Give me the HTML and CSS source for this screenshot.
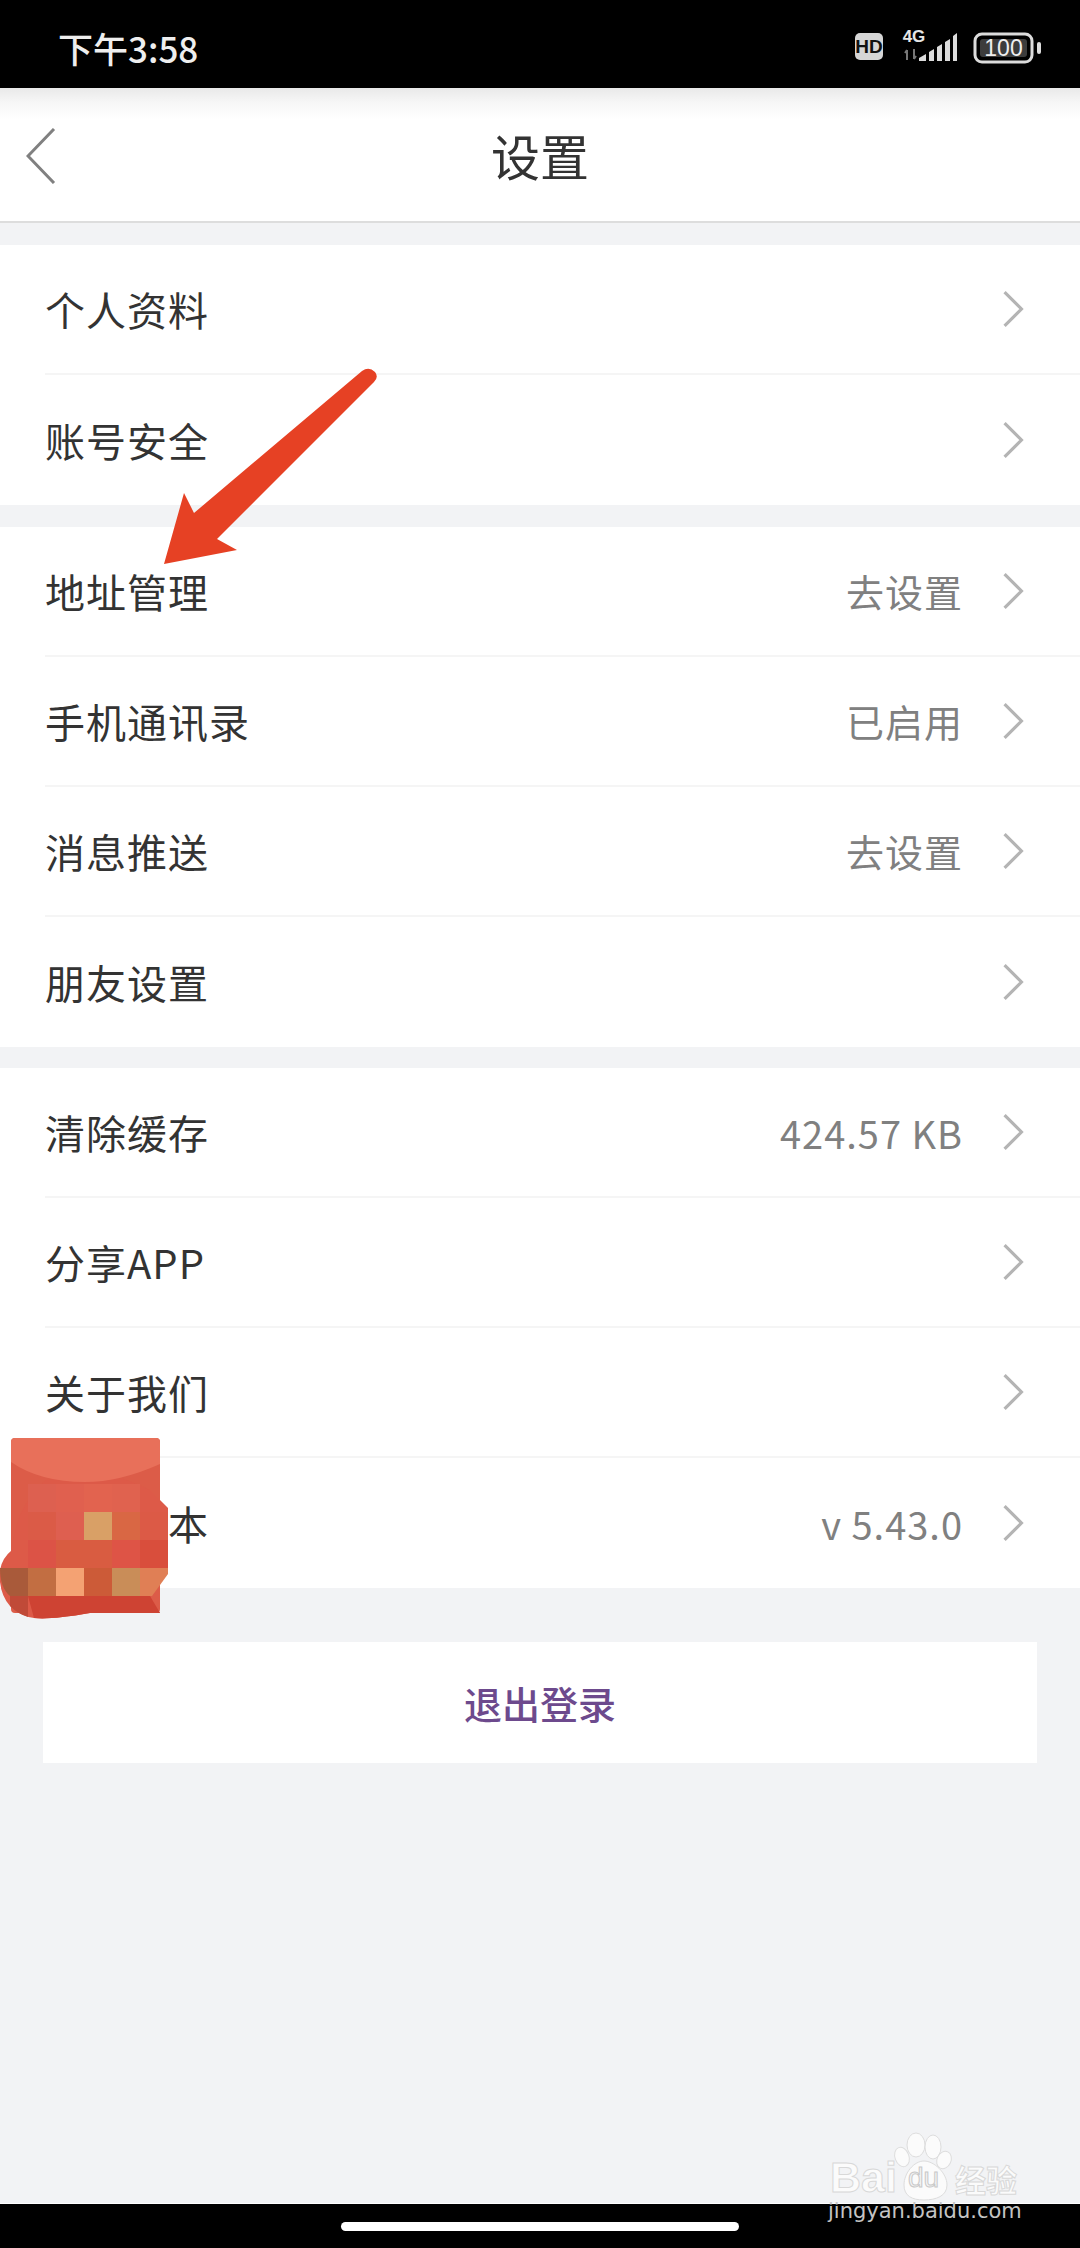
FILE: index.html
```html
<!DOCTYPE html>
<html lang="zh-CN">
<head>
    <meta charset="UTF-8">
    <meta name="viewport" content="width=device-width, initial-scale=1.0">
    <title>设置</title>
    <link rel="stylesheet" href="styles.css">
</head>
<body>
    <div class="status-bar">
        <span class="status-time">下午3:58</span>
        <svg class="status-icons" viewBox="0 0 190 38" width="190" height="38">
            <rect x="3" y="5" width="28" height="27" rx="5" fill="#d6d6d6"/>
            <text x="17" y="24.5" class="icon-hd">HD</text>
            <text x="62" y="14" class="icon-4g">4G</text>
            <path d="M55 22v10M53 25l2-3M62 21v10M64 28l-2 3" stroke="#777" stroke-width="2" fill="none"/>
            <path d="M67 33v-3l7-4v7zM77 33v-9l5-3v12zM85 33v-14l5-3v17zM93 33v-19l5-3v22zM101 33v-25l4-3v28z" fill="#dcdcdc"/>
            <rect x="123" y="6" width="57" height="28" rx="7" fill="none" stroke="#dcdcdc" stroke-width="3"/>
            <rect x="128" y="11" width="47" height="18" rx="3" fill="#3c3c3c"/>
            <text x="151.500" y="28" class="icon-battery">100</text>
            <rect x="185" y="14" width="4" height="12" rx="2" fill="#dcdcdc"/>
        </svg>
    </div>

    <header class="nav-bar">
        <svg class="nav-back" viewBox="0 0 30 56" width="30" height="56">
            <path d="M28 1L2 28l26 27" fill="none" stroke="#808080" stroke-width="3"/>
        </svg>
        <h1 class="nav-title">设置</h1>
    </header>

    <main class="settings">
        <section class="group">
            <div class="row"><div class="row-inner"><span class="row-label">个人资料</span><span class="row-right"><svg class="chevron" viewBox="0 0 20 36"><path d="M2 2l16 16L2 34"/></svg></span></div></div>
            <div class="row"><div class="row-inner"><span class="row-label">账号安全</span><span class="row-right"><svg class="chevron" viewBox="0 0 20 36"><path d="M2 2l16 16L2 34"/></svg></span></div></div>
        </section>

        <section class="group">
            <div class="row"><div class="row-inner"><span class="row-label">地址管理</span><span class="row-right"><span class="row-value">去设置</span><svg class="chevron" viewBox="0 0 20 36"><path d="M2 2l16 16L2 34"/></svg></span></div></div>
            <div class="row"><div class="row-inner"><span class="row-label">手机通讯录</span><span class="row-right"><span class="row-value">已启用</span><svg class="chevron" viewBox="0 0 20 36"><path d="M2 2l16 16L2 34"/></svg></span></div></div>
            <div class="row"><div class="row-inner"><span class="row-label">消息推送</span><span class="row-right"><span class="row-value">去设置</span><svg class="chevron" viewBox="0 0 20 36"><path d="M2 2l16 16L2 34"/></svg></span></div></div>
            <div class="row"><div class="row-inner"><span class="row-label">朋友设置</span><span class="row-right"><svg class="chevron" viewBox="0 0 20 36"><path d="M2 2l16 16L2 34"/></svg></span></div></div>
        </section>

        <section class="group">
            <div class="row"><div class="row-inner"><span class="row-label">清除缓存</span><span class="row-right"><span class="row-value">424.57 KB</span><svg class="chevron" viewBox="0 0 20 36"><path d="M2 2l16 16L2 34"/></svg></span></div></div>
            <div class="row"><div class="row-inner"><span class="row-label">分享APP</span><span class="row-right"><svg class="chevron" viewBox="0 0 20 36"><path d="M2 2l16 16L2 34"/></svg></span></div></div>
            <div class="row"><div class="row-inner"><span class="row-label">关于我们</span><span class="row-right"><svg class="chevron" viewBox="0 0 20 36"><path d="M2 2l16 16L2 34"/></svg></span></div></div>
            <div class="row"><div class="row-inner"><span class="row-label">当前版本</span><span class="row-right"><span class="row-value">v 5.43.0</span><svg class="chevron" viewBox="0 0 20 36"><path d="M2 2l16 16L2 34"/></svg></span></div></div>
        </section>

        <button class="logout">退出登录</button>
    </main>

    <footer class="home-bar"><span class="home-indicator"></span></footer>

    <!-- annotation arrow drawn over the list -->
    <svg class="arrow" viewBox="0 0 1080 2248" width="1080" height="2248">
        <path d="M164 564L184 493L194 513L362 371Q369 366 375 372Q379 377 374 382L217 539L237 550Z" fill="#e64124"/>
    </svg>

    <!-- red packet with the mosaic smear -->
    <svg class="packet" viewBox="0 0 170 200" width="170" height="200">
        <rect x="11" y="18" width="149" height="175" rx="4" fill="#dc5c48"/>
        <path d="M0 150Q2 138 12 130Q16 85 46 60L96 50Q130 60 150 70L168 88V150Q160 166 150 176L160 193H90Q50 200 34 198Q20 196 10 186Q-2 172 0 150Z" fill="#dd5a48"/>
        <path d="M11 22Q11 18 15 18H156Q160 18 160 22V44Q120 62 85 62Q40 62 11 42Z" fill="#e8705a"/>
        <rect x="28" y="64" width="28" height="28" fill="#dd6050"/>
        <rect x="56" y="64" width="28" height="28" fill="#e0604f"/>
        <rect x="84" y="64" width="28" height="28" fill="#e2634f"/>
        <rect x="112" y="64" width="28" height="28" fill="#e0624f"/>
        <rect x="28" y="92" width="28" height="28" fill="#db5b47"/>
        <rect x="56" y="92" width="28" height="28" fill="#de5f50"/>
        <rect x="84" y="92" width="28" height="28" fill="#d9a066"/>
        <rect x="112" y="92" width="28" height="28" fill="#d96744"/>
        <rect x="140" y="92" width="28" height="28" fill="#dc5a46"/>
        <rect x="28" y="120" width="28" height="28" fill="#dc5346"/>
        <rect x="56" y="120" width="56" height="28" fill="#d95c41"/>
        <rect x="112" y="120" width="28" height="28" fill="#de5446"/>
        <rect x="140" y="120" width="28" height="28" fill="#d94e3c"/>
        <path d="M0 148H28V176H10Q0 168 0 148Z" fill="#a95a3a"/>
        <rect x="28" y="148" width="28" height="28" fill="#c26e42"/>
        <rect x="56" y="148" width="28" height="28" fill="#f4a273"/>
        <rect x="84" y="148" width="28" height="28" fill="#cc5b38"/>
        <rect x="112" y="148" width="28" height="28" fill="#c98d58"/>
        <path d="M140 148H168V154L152 176H140Z" fill="#e07f55"/>
        <path d="M28 176H150L160 193H90Q50 200 34 198Z" fill="#ce4333"/>
        <path d="M10 176H28V197Q18 194 10 186Z" fill="#c04a38"/>
    </svg>

    <!-- baidu watermark -->
    <svg class="watermark" viewBox="0 0 200 80" width="200" height="80">
        <g class="mark-paw">
            <ellipse cx="86" cy="20" rx="9" ry="12"/>
            <ellipse cx="103" cy="22" rx="8" ry="12"/>
            <ellipse cx="72" cy="32" rx="7" ry="10" transform="rotate(-20 72 32)"/>
            <ellipse cx="114" cy="35" rx="7" ry="9" transform="rotate(25 114 35)"/>
            <path d="M94 36C104 36 117 48 117 60C117 71 106 75 94 75C82 75 74 71 74 60C74 48 84 36 94 36Z"/>
        </g>
        <text x="0" y="67" class="mark-bai">Bai</text>
        <text x="78" y="62" class="mark-du">du</text>
        <text x="125" y="67" class="mark-cn">经验</text>
    </svg>
    <span class="watermark-url">jingyan.baidu.com</span>
</body>
</html>
```

FILE: styles.css
```css
html, body {
    margin: 0;
    padding: 0;
}
body {
    position: relative;
    width: 1080px;
    height: 2248px;
    overflow: hidden;
    display: flex;
    flex-direction: column;
    background: #f2f3f5;
    color: #333333;
    font-family: "Noto Sans CJK SC", "Noto Sans", sans-serif;
}
.status-bar {
    height: 88px;
    flex: none;
    box-sizing: border-box;
    padding: 6px 38px 0 58px;
    display: flex;
    align-items: center;
    justify-content: space-between;
    background: #000000;
}
.status-time {
    font-size: 35px;
    font-weight: 500;
    color: #eeeeee;
}
.icon-hd {
    font-family: "Liberation Sans", sans-serif;
    font-size: 19px;
    font-weight: bold;
    text-anchor: middle;
    fill: #111111;
}
.icon-4g {
    font-family: "Liberation Sans", sans-serif;
    font-size: 17px;
    font-weight: bold;
    text-anchor: middle;
    fill: #e6e6e6;
}
.icon-battery {
    font-family: "Liberation Sans", sans-serif;
    font-size: 23px;
    text-anchor: middle;
    fill: #eeeeee;
}
.nav-bar {
    height: 135px;
    flex: none;
    box-sizing: border-box;
    display: flex;
    align-items: center;
    justify-content: center;
    position: relative;
    background: linear-gradient(to bottom, #e9e9e9 0, #f6f6f6 14px, #ffffff 32px);
    border-bottom: 2px solid #dddddd;
}
.nav-back {
    position: absolute;
    left: 26px;
    top: 40px;
}
.nav-title {
    margin: 0;
    font-size: 49px;
    font-weight: 400;
    line-height: 72px;
    color: #333333;
}
.settings {
    flex: 1;
    padding-top: 22px;
    display: flex;
    flex-direction: column;
    gap: 21.5px;
}
.group {
    background: #ffffff;
}
.row {
    padding-left: 45px;
}
.row-inner {
    height: 130px;
    box-sizing: border-box;
    padding-right: 56px;
    display: flex;
    align-items: center;
    justify-content: space-between;
    border-bottom: 2px solid #f5f5f5;
}
.row:last-child .row-inner {
    border-bottom: none;
}
.row-label {
    font-size: 40px;
    letter-spacing: 1px;
    color: #333333;
}
.row-right {
    display: flex;
    align-items: center;
    gap: 39px;
}
.row-value {
    font-size: 38px;
    letter-spacing: 1px;
    color: #808080;
}
.chevron {
    width: 22px;
    height: 38px;
    fill: none;
    stroke: #b4b4b4;
    stroke-width: 3;
}
.logout {
    width: 994px;
    height: 121px;
    margin: 32.5px 0 0 43px;
    padding: 0;
    border: none;
    background: #ffffff;
    color: #6d4a8d;
    font-family: inherit;
    font-size: 38px;
    font-weight: 500;
}
.home-bar {
    height: 45px;
    flex: none;
    display: flex;
    align-items: center;
    justify-content: center;
    background: #000000;
    border-top: 1px solid #ffffff;
    box-sizing: border-box;
}
.home-indicator {
    width: 398px;
    height: 9px;
    border-radius: 5px;
    background: #ffffff;
}
.arrow {
    position: absolute;
    left: 0;
    top: 0;
    pointer-events: none;
}
.packet {
    position: absolute;
    left: 0;
    top: 1420px;
}
.watermark {
    position: absolute;
    left: 830px;
    top: 2125px;
    overflow: visible;
}
.mark-paw {
    fill: #fbfbfb;
    stroke: #dddddd;
    stroke-width: 1;
}
.mark-bai {
    font-family: "Liberation Sans", sans-serif;
    font-size: 43px;
    font-weight: bold;
    fill: #fbfbfb;
    stroke: #d8d8d8;
    stroke-width: 1;
}
.mark-du {
    font-family: "Liberation Sans", sans-serif;
    font-size: 28px;
    fill: #f4f4f4;
    stroke: #c8c8c8;
    stroke-width: 1;
}
.mark-cn {
    font-size: 31px;
    font-weight: 700;
    fill: #fbfbfb;
    stroke: #d8d8d8;
    stroke-width: 1;
}
.watermark-url {
    position: absolute;
    left: 828px;
    top: 2196px;
    font-family: "DejaVu Sans", sans-serif;
    font-size: 21px;
    line-height: 30px;
    color: #c4c4c4;
}
```
